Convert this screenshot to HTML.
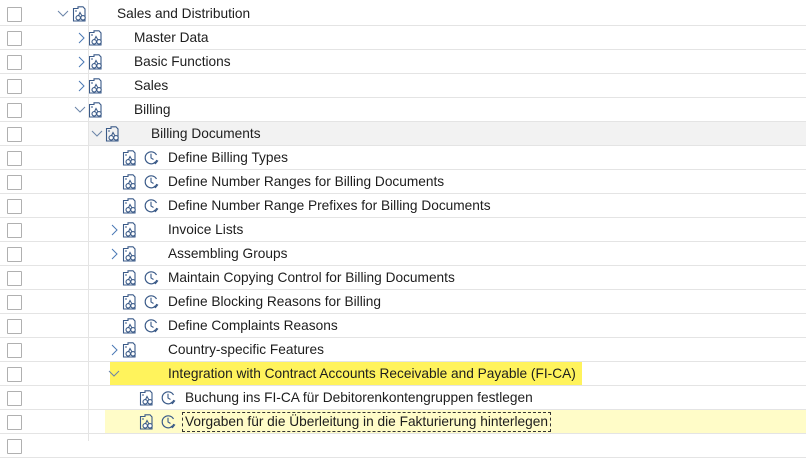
<!DOCTYPE html>
<html><head><meta charset="utf-8"><style>
*{margin:0;padding:0;box-sizing:border-box}
body{width:806px;height:441px;overflow:hidden;background:#fff;font-family:"Liberation Sans",Arial,sans-serif;font-size:13.7px;color:#1d1d1d;position:relative}
.row{position:absolute;left:0;width:806px;height:24px;border-bottom:1px solid #e4e4e4}
.cb{position:absolute;left:7px;top:5px;width:15px;height:15px;border:1px solid #b0b0b0;background:#fff;border-radius:1px}
.vl{position:absolute;left:88px;top:0;width:1px;height:441px;background:#e4e4e4}
.t{position:absolute;top:3px;white-space:nowrap;line-height:18px}
svg{position:absolute}
.hl{position:absolute;top:0;height:23px}
</style></head><body>
<svg width="0" height="0" style="position:absolute"><defs>
<g id="fold"><path d="M1.5 2.5 L6 2.5 L6 0.8 L11 0.8 L13 3 L13 15 L1.5 15 Z" fill="none" stroke="#3a5a88" stroke-width="1.1"/><path d="M3 5 L5 5" stroke="#3a5a88"/><circle cx="6.2" cy="11.8" r="2.2" fill="#fff" stroke="#3a5a88" stroke-width="1.1"/><circle cx="11" cy="11.8" r="2.2" fill="#fff" stroke="#3a5a88" stroke-width="1.1"/><path d="M6.5 9.6 L8 6.5 L9.8 9.6" fill="none" stroke="#3a5a88" stroke-width="1"/></g>
<g id="clk"><path d="M12.5 5 A6 6 0 1 0 12.8 10" fill="none" stroke="#3a5a88" stroke-width="1.2"/><path d="M7 3.8 L7 8 L9.5 9.5" fill="none" stroke="#3a5a88" stroke-width="1.1"/><path d="M10 12 L11.5 13.5 L14 10.5" fill="none" stroke="#3a5a88" stroke-width="1.1"/></g>
<path id="chr" d="M2 1 L7 6 L2 11" fill="none" stroke="#4a78b5" stroke-width="1"/>
<path id="chd" d="M1 3 L6 8 L11 3" fill="none" stroke="#6a84a8" stroke-width="1"/>
</defs></svg>

<div class="row" style="top:2px"><div class="cb"></div><svg style="left:57px;top:6px" width="13" height="12"><use href="#chd"/></svg><svg style="left:72px;top:4px" width="16" height="17"><use href="#fold"/></svg><span class="t" style="left:117px">Sales and Distribution</span></div>
<div class="row" style="top:26px"><div class="cb"></div><svg style="left:77px;top:6px" width="10" height="13"><use href="#chr"/></svg><svg style="left:88px;top:4px" width="16" height="17"><use href="#fold"/></svg><span class="t" style="left:134px">Master Data</span></div>
<div class="row" style="top:50px"><div class="cb"></div><svg style="left:77px;top:6px" width="10" height="13"><use href="#chr"/></svg><svg style="left:88px;top:4px" width="16" height="17"><use href="#fold"/></svg><span class="t" style="left:134px">Basic Functions</span></div>
<div class="row" style="top:74px"><div class="cb"></div><svg style="left:77px;top:6px" width="10" height="13"><use href="#chr"/></svg><svg style="left:88px;top:4px" width="16" height="17"><use href="#fold"/></svg><span class="t" style="left:134px">Sales</span></div>
<div class="row" style="top:98px"><div class="cb"></div><svg style="left:74px;top:6px" width="13" height="12"><use href="#chd"/></svg><svg style="left:88px;top:4px" width="16" height="17"><use href="#fold"/></svg><span class="t" style="left:134px">Billing</span></div>
<div class="row" style="top:122px"><div class="hl" style="left:89px;width:717px;background:#f2f2f2"></div><div class="cb"></div><svg style="left:91px;top:6px" width="13" height="12"><use href="#chd"/></svg><svg style="left:105px;top:4px" width="16" height="17"><use href="#fold"/></svg><span class="t" style="left:151px">Billing Documents</span></div>
<div class="row" style="top:146px"><div class="cb"></div><svg style="left:122px;top:4px" width="16" height="17"><use href="#fold"/></svg><svg style="left:144px;top:4px" width="16" height="16"><use href="#clk"/></svg><span class="t" style="left:168px">Define Billing Types</span></div>
<div class="row" style="top:170px"><div class="cb"></div><svg style="left:122px;top:4px" width="16" height="17"><use href="#fold"/></svg><svg style="left:144px;top:4px" width="16" height="16"><use href="#clk"/></svg><span class="t" style="left:168px">Define Number Ranges for Billing Documents</span></div>
<div class="row" style="top:194px"><div class="cb"></div><svg style="left:122px;top:4px" width="16" height="17"><use href="#fold"/></svg><svg style="left:144px;top:4px" width="16" height="16"><use href="#clk"/></svg><span class="t" style="left:168px">Define Number Range Prefixes for Billing Documents</span></div>
<div class="row" style="top:218px"><div class="cb"></div><svg style="left:110px;top:6px" width="10" height="13"><use href="#chr"/></svg><svg style="left:122px;top:4px" width="16" height="17"><use href="#fold"/></svg><span class="t" style="left:168px">Invoice Lists</span></div>
<div class="row" style="top:242px"><div class="cb"></div><svg style="left:110px;top:6px" width="10" height="13"><use href="#chr"/></svg><svg style="left:122px;top:4px" width="16" height="17"><use href="#fold"/></svg><span class="t" style="left:168px">Assembling Groups</span></div>
<div class="row" style="top:266px"><div class="cb"></div><svg style="left:122px;top:4px" width="16" height="17"><use href="#fold"/></svg><svg style="left:144px;top:4px" width="16" height="16"><use href="#clk"/></svg><span class="t" style="left:168px">Maintain Copying Control for Billing Documents</span></div>
<div class="row" style="top:290px"><div class="cb"></div><svg style="left:122px;top:4px" width="16" height="17"><use href="#fold"/></svg><svg style="left:144px;top:4px" width="16" height="16"><use href="#clk"/></svg><span class="t" style="left:168px">Define Blocking Reasons for Billing</span></div>
<div class="row" style="top:314px"><div class="cb"></div><svg style="left:122px;top:4px" width="16" height="17"><use href="#fold"/></svg><svg style="left:144px;top:4px" width="16" height="16"><use href="#clk"/></svg><span class="t" style="left:168px">Define Complaints Reasons</span></div>
<div class="row" style="top:338px"><div class="cb"></div><svg style="left:110px;top:6px" width="10" height="13"><use href="#chr"/></svg><svg style="left:122px;top:4px" width="16" height="17"><use href="#fold"/></svg><span class="t" style="left:168px">Country-specific Features</span></div>
<div class="row" style="top:362px"><div class="hl" style="left:110px;width:472px;background:#fff35c"></div><div class="cb"></div><svg style="left:108px;top:6px" width="13" height="12"><use href="#chd"/></svg><span class="t" style="left:168px">Integration with Contract Accounts Receivable and Payable (FI-CA)</span></div>
<div class="row" style="top:386px"><div class="cb"></div><svg style="left:139px;top:4px" width="16" height="17"><use href="#fold"/></svg><svg style="left:161px;top:4px" width="16" height="16"><use href="#clk"/></svg><span class="t" style="left:185px">Buchung ins FI-CA für Debitorenkontengruppen festlegen</span></div>
<div class="row" style="top:410px"><div class="hl" style="left:105px;width:701px;background:#fffcc8"></div><div class="cb"></div><svg style="left:139px;top:4px" width="16" height="17"><use href="#fold"/></svg><svg style="left:161px;top:4px" width="16" height="16"><use href="#clk"/></svg><span class="t" style="left:182px;padding:0 2px;border:1px dashed #333;top:2px;line-height:18px">Vorgaben für die Überleitung in die Fakturierung hinterlegen</span></div>
<div class="row" style="top:434px"><div class="cb"></div></div>
<div class="vl"></div>
</body></html>
